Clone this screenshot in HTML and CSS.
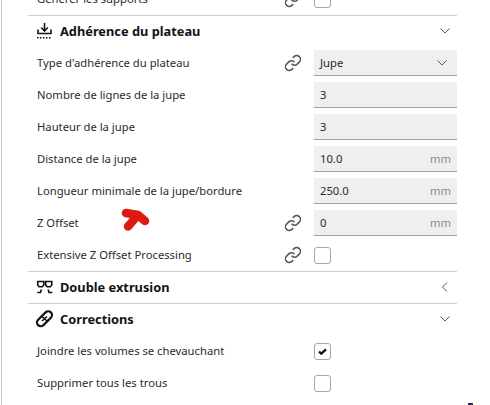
FILE: index.html
```html
<!DOCTYPE html>
<html lang="fr">
<head>
  <meta charset="UTF-8">
  <title>Paramètres d'impression</title>
  <link rel="stylesheet" href="styles.css">
</head>
<body>
  <svg class="icon-defs" width="0" height="0">
    <symbol id="link" viewBox="0 0 24 24">
      <path d="M10 13a5 5 0 0 0 7.54.54l3-3a5 5 0 0 0-7.07-7.07l-1.72 1.71"/>
      <path d="M14 11a5 5 0 0 0-7.54-.54l-3 3a5 5 0 0 0 7.07 7.07l1.71-1.71"/>
    </symbol>
    <symbol id="chevron-down" viewBox="0 0 12 8">
      <path d="M1.5 1.5 6 6l4.5-4.5"/>
    </symbol>
  </svg>

  <div class="panel">
    <div class="list">
      <div class="row">
        <span class="label">Générer les supports</span>
        <svg class="link"><use href="#link"/></svg>
        <span class="checkbox"></span>
      </div>

      <!-- Adherence -->
      <div class="header">
        <svg class="header-icon" viewBox="0 0 18 18">
          <path class="thick" d="M8.500 1v7.500M5.200 5.500 8.500 9l3.300-3.500"/>
          <path class="thick" d="M2 7.500v4h13v-4"/>
          <path class="dots" d="M1 15.700h15"/>
        </svg>
        <span class="title">Adhérence du plateau</span>
        <svg class="chevron"><use href="#chevron-down"/></svg>
      </div>
      <div class="row">
        <span class="label">Type d'adhérence du plateau</span>
        <svg class="link"><use href="#link"/></svg>
        <div class="field">Jupe<svg class="chevron select-arrow"><use href="#chevron-down"/></svg></div>
      </div>
      <div class="row">
        <span class="label">Nombre de lignes de la jupe</span>
        <div class="field">3</div>
      </div>
      <div class="row">
        <span class="label">Hauteur de la jupe</span>
        <div class="field">3</div>
      </div>
      <div class="row">
        <span class="label">Distance de la jupe</span>
        <div class="field">10.0<span class="unit">mm</span></div>
      </div>
      <div class="row">
        <span class="label">Longueur minimale de la jupe/bordure</span>
        <div class="field">250.0<span class="unit">mm</span></div>
      </div>
      <div class="row">
        <span class="label">Z Offset</span>
        <svg class="link"><use href="#link"/></svg>
        <div class="field">0<span class="unit">mm</span></div>
      </div>
      <div class="row">
        <span class="label">Extensive Z Offset Processing</span>
        <svg class="link"><use href="#link"/></svg>
        <span class="checkbox"></span>
      </div>

      <!-- Dual extrusion -->
      <div class="header">
        <svg class="header-icon" viewBox="0 0 18 18">
          <path class="thick" d="M1.700 3.500h6.100v3.500L6.300 8.800H3.200L1.700 7zM9.700 3.500h6.100V7l-1.500 1.800h-3.100L9.700 7z"/>
          <path class="thick" d="M1.200 14.500h3.300l.8-3M16.300 14.500H13l-.8-3"/>
        </svg>
        <span class="title">Double extrusion</span>
        <svg class="chevron-left" viewBox="0 0 8 12"><path d="M6 1.500 1.500 6 6 10.500"/></svg>
      </div>

      <!-- Corrections -->
      <div class="header">
        <svg class="header-icon" viewBox="0 0 18 18">
          <rect class="heavy" x="-0.500" y="5" width="18" height="7.500" rx="3.750" transform="rotate(-45 8.500 8.750)"/>
          <path class="thick" d="m6 6.500 5 4.500M11 6.500 6 11"/>
        </svg>
        <span class="title">Corrections</span>
        <svg class="chevron"><use href="#chevron-down"/></svg>
      </div>
      <div class="row">
        <span class="label">Joindre les volumes se chevauchant</span>
        <span class="checkbox">
          <svg class="tick" viewBox="0 0 10 8"><path d="M1 4.200 3.600 6.500 9 1.500"/></svg>
        </span>
      </div>
      <div class="row">
        <span class="label">Supprimer tous les trous</span>
        <span class="checkbox"></span>
      </div>
    </div>

    <!-- red scribble drawn over the screenshot -->
    <svg class="scribble" viewBox="0 0 30 24">
      <path d="M6 5 18 7M25 13 18 7 8 18.500"/>
    </svg>
    <span class="corner-mark"></span>
  </div>
</body>
</html>
```

FILE: styles.css
```css
html, body {
  margin: 0;
  padding: 0;
  height: 100%;
  overflow: hidden;
  background: white;
}
body {
  font-family: "Noto Sans", "Open Sans", sans-serif;
  font-size: 11.25px;
  color: #2a2a35;
}
.icon-defs {
  position: absolute;
}
.panel {
  position: relative;
  height: 405px;
  overflow: hidden;
  padding-left: 1px;
  box-sizing: border-box;
}
.panel::before {
  content: "";
  position: absolute;
  left: 1px;
  top: 0;
  bottom: 0;
  width: 1px;
  background: #c8c8c8;
}
.list {
  width: 429px;
  margin: -17px 0 0 27px;
}
.row, .header {
  display: flex;
  align-items: center;
  height: 32px;
  box-sizing: border-box;
  position: relative;
}
.header {
  border-top: 1px solid #cfcfcf;
  padding-bottom: 1px;
}
.label {
  position: absolute;
  left: 9px;
  margin-top: -1px;
  white-space: nowrap;
}
.title {
  position: absolute;
  left: 32px;
  font-size: 12.8px;
  font-weight: 700;
  color: #12131a;
}
.header-icon {
  position: absolute;
  left: 8px;
  width: 18px;
  height: 18px;
  fill: none;
  stroke: #12131a;
}
.thick {
  stroke-width: 1.6;
  fill: none;
}
.heavy {
  stroke-width: 2.2;
  fill: none;
}
.dots {
  stroke-width: 1.4;
  stroke-dasharray: 1.5 1.5;
}
.link {
  position: absolute;
  left: 256px;
  width: 18px;
  height: 18px;
  fill: none;
  stroke: #555;
  stroke-width: 2;
}
.field {
  display: flex;
  align-items: center;
  box-sizing: border-box;
  width: 143px;
  height: 26px;
  margin-left: 286px;
  padding: 0 6px;
  background: #efefef;
  border-bottom: 1px solid #a3a3a3;
  position: relative;
}
.unit {
  margin-left: auto;
  color: #8c8c8c;
}
.checkbox {
  display: flex;
  align-items: center;
  justify-content: center;
  box-sizing: border-box;
  width: 17px;
  height: 17px;
  margin-left: 286px;
  border: 1px solid #a8a8a8;
  border-radius: 3px;
  background: white;
}
.tick {
  width: 9px;
  height: 7px;
  fill: none;
  stroke: #12131a;
  stroke-width: 2.6;
}
.chevron {
  width: 12px;
  height: 8px;
  margin-left: auto;
  margin-right: 6px;
  fill: none;
  stroke: #555;
  stroke-width: 1;
}
.select-arrow {
  margin-right: 3px;
}
.chevron-left {
  width: 8px;
  height: 12px;
  margin-left: auto;
  margin-right: 8px;
  fill: none;
  stroke: #555;
  stroke-width: 1;
}
.scribble {
  position: absolute;
  left: 120px;
  top: 208px;
  width: 30px;
  height: 24px;
  fill: none;
  stroke: #db1a12;
  stroke-width: 8.5;
  stroke-linecap: round;
  stroke-linejoin: round;
}
.corner-mark {
  position: absolute;
  left: 468px;
  top: 403px;
  width: 5px;
  height: 2px;
  background: #2a2a50;
}
```
